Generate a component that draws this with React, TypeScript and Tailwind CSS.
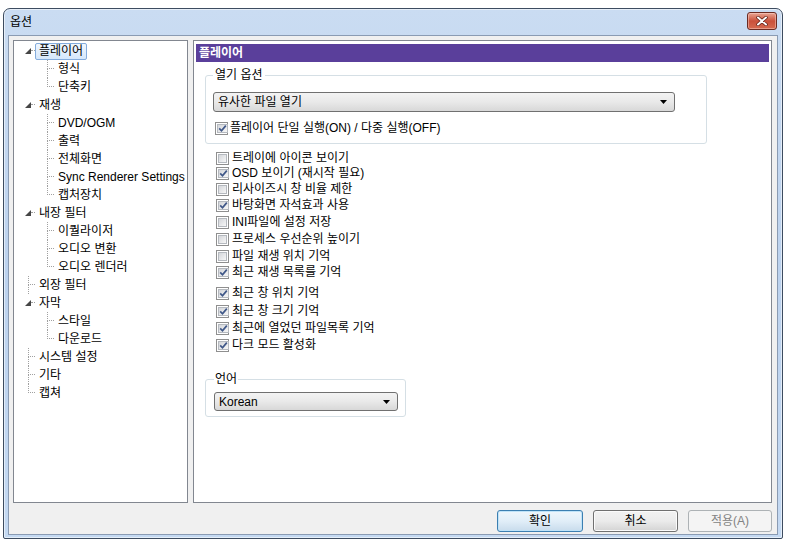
import React from 'react';

type TreeNode = {
  label: string;
  kind: 'parent' | 'leaf' | 'child';
  last?: boolean;
  selected?: boolean;
};

const tree: TreeNode[] = [
  { label: '플레이어', kind: 'parent', selected: true },
  { label: '형식', kind: 'child' },
  { label: '단축키', kind: 'child', last: true },
  { label: '재생', kind: 'parent' },
  { label: 'DVD/OGM', kind: 'child' },
  { label: '출력', kind: 'child' },
  { label: '전체화면', kind: 'child' },
  { label: 'Sync Renderer Settings', kind: 'child' },
  { label: '캡처장치', kind: 'child', last: true },
  { label: '내장 필터', kind: 'parent' },
  { label: '이퀄라이저', kind: 'child' },
  { label: '오디오 변환', kind: 'child' },
  { label: '오디오 렌더러', kind: 'child', last: true },
  { label: '외장 필터', kind: 'leaf' },
  { label: '자막', kind: 'parent' },
  { label: '스타일', kind: 'child' },
  { label: '다운로드', kind: 'child', last: true },
  { label: '시스템 설정', kind: 'leaf' },
  { label: '기타', kind: 'leaf' },
  { label: '캡쳐', kind: 'leaf', last: true },
];

const options = [
  { label: '트레이에 아이콘 보이기', checked: false, h: 'h-[15px]' },
  { label: 'OSD 보이기 (재시작 필요)', checked: true, h: 'h-[16px]' },
  { label: '리사이즈시 창 비율 제한', checked: false, h: 'h-[16px]' },
  { label: '바탕화면 자석효과 사용', checked: true, h: 'h-[17px]' },
  { label: 'INI파일에 설정 저장', checked: false, h: 'h-[17px]' },
  { label: '프로세스 우선순위 높이기', checked: false, h: 'h-[17px]' },
  { label: '파일 재생 위치 기억', checked: false, h: 'h-[16px]' },
  { label: '최근 재생 목록를 기억', checked: true, h: 'h-[21px]' },
  { label: '최근 창 위치 기억', checked: true, h: 'h-[18px]' },
  { label: '최근 창 크기 기억', checked: true, h: 'h-[17px]' },
  { label: '최근에 열었던 파일목록 기억', checked: true, h: 'h-[17px]' },
  { label: '다크 모드 활성화', checked: true, h: 'h-[16px]' },
];

function CheckBox({ checked }: { checked: boolean }) {
  return (
    <span className="w-[13px] h-[13px] shrink-0 border border-[#8f8f8f] bg-white p-[1px] flex">
      <span className="flex-1 border border-[#b5b9bf] bg-gradient-to-br from-[#d4d6da] to-[#f7f7f7] flex items-center justify-center">
        {checked && (
          <svg width="9" height="9" viewBox="0 0 9 9">
            <path d="M1.2 4.4 L3.5 6.8 L7.8 1.6" stroke="#3f5788" strokeWidth="1.7" fill="none" />
          </svg>
        )}
      </span>
    </span>
  );
}

function Combo({ value, className }: { value: string; className: string }) {
  return (
    <div
      className={`${className} border border-[#707070] rounded-[3px] bg-gradient-to-b from-[#f3f3f3] via-[#e9e9e9] to-[#d8d8d8] flex items-center pl-[4px] pr-[7px] leading-[16px]`}
    >
      <span>{value}</span>
      <svg className="ml-auto" width="7" height="4" viewBox="0 0 7 4">
        <path d="M0 0 H7 L3.5 4 Z" fill="#000" />
      </svg>
    </div>
  );
}

function TreeRow({ node }: { node: TreeNode }) {
  const label = (
    <span
      className={`h-[17px] leading-[15px] px-[3px] border rounded-[2px] whitespace-nowrap ${
        node.selected
          ? 'border-[#84acdd] bg-gradient-to-b from-[#f1f7fe] to-[#d5e7fb]'
          : 'border-transparent'
      }`}
    >
      {node.label}
    </span>
  );

  if (node.kind === 'parent') {
    return (
      <div className="h-[18px] flex items-center">
        <span className="w-[11px] shrink-0" />
        <svg className="shrink-0" width="6" height="6" viewBox="0 0 6 6">
          <path d="M6 0 V6 H0 Z" fill="#464646" />
        </svg>
        <span className="w-[4px] self-stretch flex flex-col">
          <span className="h-[9px] border-b border-dotted border-[#a0a0a0]" />
        </span>
        {label}
      </div>
    );
  }

  const indent = node.kind === 'leaf' ? 'w-[14px]' : 'w-[33px]';
  return (
    <div className="h-[18px] flex items-center">
      <span className={`${indent} shrink-0`} />
      <span className="w-[7px] shrink-0 self-stretch flex flex-col">
        <span className="h-[9px] border-l border-b border-dotted border-[#a0a0a0]" />
        {!node.last && <span className="flex-1 border-l border-dotted border-[#a0a0a0]" />}
      </span>
      {label}
    </div>
  );
}

export default function App() {
  return (
    <div className="w-[792px] h-[545px] bg-white pl-[3px] pt-[8px] text-[12px] text-black font-['Liberation_Sans','Noto_Sans_CJK_KR',sans-serif]">
      <div className="w-[780px] h-[531px] rounded-t-[7px] rounded-b-[2px] border border-[#3d4c60] bg-gradient-to-b from-[#cadcf2] via-[#bcd2ee] to-[#c4d9f2] flex flex-col shadow-[inset_0_0_0_1px_rgba(255,255,255,0.55)]">
        {/* title bar */}
        <div className="h-[26px] flex items-center pl-[6px] pr-[5px]">
          <span className="leading-[16px]">옵션</span>
          <div className="ml-auto mt-[-3px] w-[30px] h-[18px] rounded-[3px] border border-[#6b2b22] bg-gradient-to-b from-[#e8a493] via-[#c9503a] to-[#d56a4f] flex items-center justify-center shadow-[inset_0_0_0_1px_rgba(255,220,210,0.45)]">
            <svg width="12" height="10" viewBox="0 0 12 10">
              <path d="M2 1.5 L10 8.5 M10 1.5 L2 8.5" stroke="#5a1c14" strokeWidth="3.4" strokeLinecap="round" />
              <path d="M2 1.5 L10 8.5 M10 1.5 L2 8.5" stroke="#ffffff" strokeWidth="2" strokeLinecap="round" />
            </svg>
          </div>
        </div>

        {/* client area */}
        <div className="mx-[4px] mb-[3px] flex-1 border border-[#8a9bb3] bg-[#f0f0f0] flex flex-col pt-[4px] pl-[4px] pr-[5px]">
          <div className="h-[463px] flex gap-[5px]">
            {/* tree */}
            <div className="w-[175px] shrink-0 border border-[#828790] bg-white pt-[1px]">
              {tree.map((n) => (
                <TreeRow key={n.label} node={n} />
              ))}
            </div>

            {/* page */}
            <div className="flex-1 border border-[#828790] bg-white px-[2px] pt-[3px]">
              <div className="h-[18px] bg-[#5a3f9b] text-white font-bold pl-[3px] leading-[18px]">플레이어</div>

              <div className="pl-[9px] pt-[5px]">
                <fieldset className="w-[502px] border border-[#d5dfe5] rounded-[3px] px-[7px] pt-[9px] pb-[7px]">
                  <legend className="px-[2px] leading-[16px]">열기 옵션</legend>
                  <Combo value="유사한 파일 열기" className="w-[462px] h-[20px]" />
                  <div className="mt-[8px] h-[16px] flex items-center gap-[2px] pl-[2px] leading-[16px]">
                    <CheckBox checked />
                    <span>플레이어 단일 실행(ON) / 다중 실행(OFF)</span>
                  </div>
                </fieldset>

                <div className="mt-[6px] pl-[11px]">
                  {options.map((o) => (
                    <div key={o.label} className={`${o.h} flex items-start`}>
                      <div className="h-[16px] flex items-center gap-[3px] leading-[16px]">
                        <CheckBox checked={o.checked} />
                        <span>{o.label}</span>
                      </div>
                    </div>
                  ))}
                </div>

                <fieldset className="mt-[18px] w-[201px] border border-[#d5dfe5] rounded-[3px] pl-[8px] pr-[7px] pt-[5px] pb-[5px]">
                  <legend className="px-[1px] leading-[16px]">언어</legend>
                  <Combo value="Korean" className="w-[184px] h-[19px]" />
                </fieldset>
              </div>
            </div>
          </div>

          {/* buttons */}
          <div className="mt-[7px] flex justify-end gap-[10px]">
            <div className="w-[86px] h-[22px] rounded-[3px] border border-[#3c7fb1] bg-gradient-to-b from-[#eef6fc] via-[#e1eef8] to-[#c8dcec] flex items-center justify-center shadow-[inset_0_0_0_1px_#bfe3f8]">
              확인
            </div>
            <div className="w-[85px] h-[22px] rounded-[3px] border border-[#707070] bg-gradient-to-b from-[#f2f2f2] via-[#ebebeb] to-[#d4d4d4] flex items-center justify-center shadow-[inset_0_0_0_1px_#fbfbfb]">
              취소
            </div>
            <div className="w-[84px] h-[22px] rounded-[3px] border border-[#adb2b5] bg-[#f4f4f4] text-[#838383] flex items-center justify-center">
              적용(A)
            </div>
          </div>
        </div>
      </div>
    </div>
  );
}
